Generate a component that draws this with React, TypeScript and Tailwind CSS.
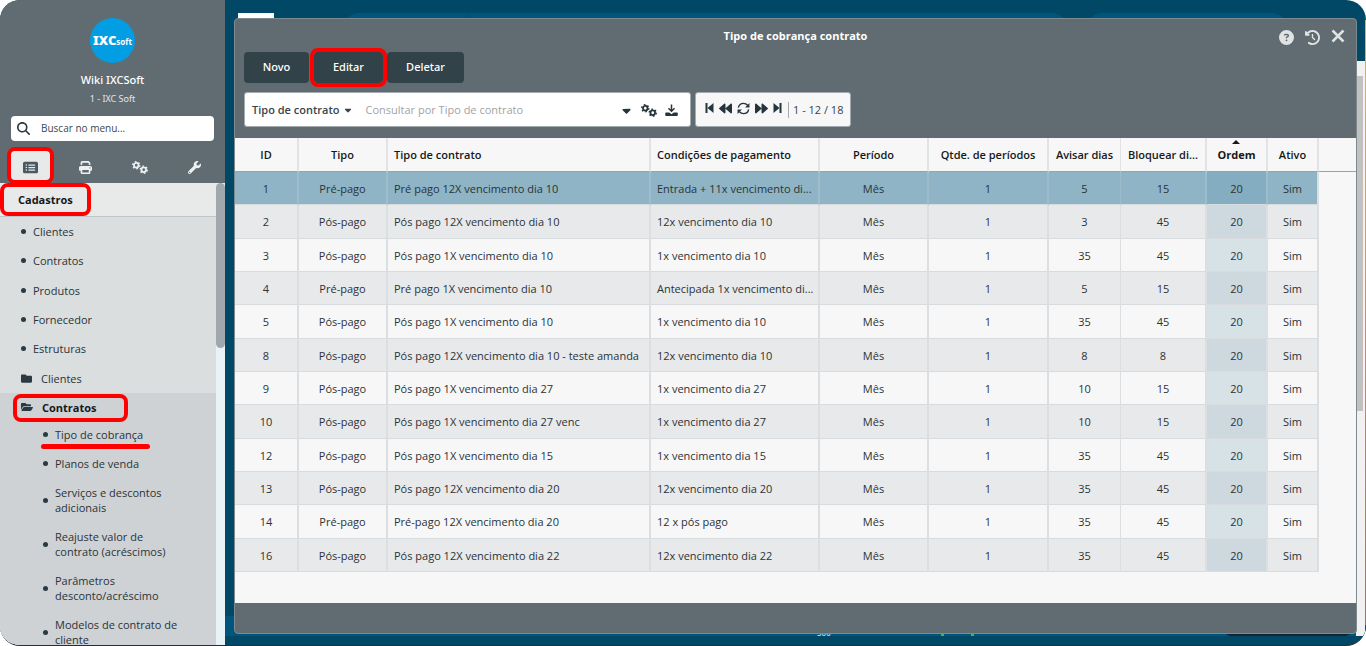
import type { ReactNode } from "react";
import { FaBackward, FaFolder, FaFolderOpen, FaForward, FaWrench } from "react-icons/fa";
import {
  FaCaretDown,
  FaCircleQuestion,
  FaClockRotateLeft,
  FaMagnifyingGlass,
  FaPrint,
  FaRectangleList,
} from "react-icons/fa6";

const shortcuts = ["Clientes", "Contratos", "Produtos", "Fornecedor", "Estruturas"];

const contratosLinks = [
  "Tipo de cobrança",
  "Planos de venda",
  "Serviços e descontos adicionais",
  "Reajuste valor de contrato (acréscimos)",
  "Parâmetros desconto/acréscimo",
  "Modelos de contrato de cliente",
];

const columns = [
  { name: "ID", width: "w-[64px]" },
  { name: "Tipo", width: "w-[89px]" },
  { name: "Tipo de contrato", width: "w-[263px]", left: true },
  { name: "Condições de pagamento", width: "w-[169px]", left: true },
  { name: "Período", width: "w-[109px]" },
  { name: "Qtde. de períodos", width: "w-[120px]" },
  { name: "Avisar dias", width: "w-[72px]", thin: true },
  { name: "Bloquear di...", width: "w-[86px]" },
  { name: "Ordem", width: "w-[61px]", sorted: true },
  { name: "Ativo", width: "w-[51px]" },
];

const rows = [
  ["1", "Pré-pago", "Pré pago 12X vencimento dia 10", "Entrada + 11x vencimento di...", "Mês", "1", "5", "15", "20", "Sim"],
  ["2", "Pós-pago", "Pós pago 12X vencimento dia 10", "12x vencimento dia 10", "Mês", "1", "3", "45", "20", "Sim"],
  ["3", "Pós-pago", "Pós pago 1X vencimento dia 10", "1x vencimento dia 10", "Mês", "1", "35", "45", "20", "Sim"],
  ["4", "Pré-pago", "Pré pago 1X vencimento dia 10", "Antecipada 1x vencimento di...", "Mês", "1", "5", "15", "20", "Sim"],
  ["5", "Pós-pago", "Pós pago 1X vencimento dia 10", "1x vencimento dia 10", "Mês", "1", "35", "45", "20", "Sim"],
  ["8", "Pós-pago", "Pós pago 12X vencimento dia 10 - teste amanda", "12x vencimento dia 10", "Mês", "1", "8", "8", "20", "Sim"],
  ["9", "Pós-pago", "Pós pago 1X vencimento dia 27", "1x vencimento dia 27", "Mês", "1", "10", "15", "20", "Sim"],
  ["10", "Pós-pago", "Pós pago 1X vencimento dia 27 venc", "1x vencimento dia 27", "Mês", "1", "10", "15", "20", "Sim"],
  ["12", "Pós-pago", "Pós pago 1X vencimento dia 15", "1x vencimento dia 15", "Mês", "1", "35", "45", "20", "Sim"],
  ["13", "Pós-pago", "Pós pago 12X vencimento dia 20", "12x vencimento dia 20", "Mês", "1", "35", "45", "20", "Sim"],
  ["14", "Pré-pago", "Pré-pago 12X vencimento dia 20", "12 x pós pago", "Mês", "1", "35", "45", "20", "Sim"],
  ["16", "Pós-pago", "Pós pago 12X vencimento dia 22", "12x vencimento dia 22", "Mês", "1", "35", "45", "20", "Sim"],
];

function Mark({ className }: { className: string }) {
  return (
    <span
      aria-hidden="true"
      className={`pointer-events-none absolute z-10 rounded-lg border-4 border-[#ff0000] ${className}`}
    />
  );
}

function Gears({ className }: { className?: string }) {
  return (
    <svg viewBox="0 0 32 26" className={className} fill="none" stroke="currentColor" aria-hidden="true">
      <circle cx="8.5" cy="8.5" r="4.6" strokeWidth="3.6" />
      <circle cx="8.5" cy="8.5" r="7.2" strokeWidth="2.6" strokeDasharray="3.4 4.14" />
      <circle cx="23.5" cy="17.5" r="4.6" strokeWidth="3.6" />
      <circle cx="23.5" cy="17.5" r="7.2" strokeWidth="2.6" strokeDasharray="3.4 4.14" />
    </svg>
  );
}

function DownloadIcon() {
  return (
    <svg viewBox="0 0 26 26" className="size-[13px]" fill="currentColor" aria-hidden="true">
      <path d="M11.5 1h3v10l3.6-3.6 2 2L13 16.5 5.9 9.4l2-2 3.6 3.6z" />
      <path d="M2 17h6.5l4.5 3.5 4.5-3.5H24a1.5 1.5 0 0 1 1.5 1.5v4A1.5 1.5 0 0 1 24 24H2a1.5 1.5 0 0 1-1.5-1.5v-4A1.5 1.5 0 0 1 2 17z" />
    </svg>
  );
}

function RefreshIcon() {
  return (
    <svg viewBox="0 0 24 24" className="size-[13px]" aria-hidden="true">
      <path
        d="M2.5 10.5C3.5 5.5 7.5 2.5 12 2.5c3 0 5.5 1.2 7.5 3.5M21.5 13.5c-1 5-5 8-9.500 8-3 0-5.500-1.200-7.500-3.500"
        fill="none"
        stroke="currentColor"
        strokeWidth="2.6"
      />
      <path d="M23 2v8h-8zM1 22v-8h8z" fill="currentColor" />
    </svg>
  );
}

function StepIcon({ flip }: { flip?: boolean }) {
  return (
    <svg viewBox="0 0 9 12" className={`h-3 w-[9px] ${flip ? "-scale-x-100" : ""}`} fill="currentColor" aria-hidden="true">
      <path d="M0.5 1h2v10h-2z" />
      <path d="M8.5 1v10l-6-5z" />
    </svg>
  );
}

function SidebarTab({ label, active, children }: { label: string; active?: boolean; children: ReactNode }) {
  return (
    <button
      aria-label={label}
      className={`relative flex h-8 w-[39px] items-center justify-center ${
        active ? "bg-[#e8eae9] text-[#4b5a62]" : "text-[#eef1f2]"
      }`}
    >
      {children}
      {active && <Mark className="-inset-x-1 -top-1 -bottom-px" />}
    </button>
  );
}

function Bullet() {
  return <span className="size-[5px] shrink-0 rounded-full bg-[#2b3a42]" />;
}

function Sidebar() {
  return (
    <aside className="flex w-[225px] shrink-0 flex-col bg-[#606c71]">
      <div className="flex flex-col items-center pt-[18px] font-['Noto_Sans',sans-serif]">
        <div className="flex size-[45px] items-baseline justify-center rounded-full bg-[#029de2] pt-3 leading-5 text-white">
          <b className="text-[13px] leading-5 font-black">IXC</b>
          <b className="text-[8px] leading-5">soft</b>
        </div>
        <p className="mt-2 text-[11px] leading-[18px] font-medium text-white">Wiki IXCSoft</p>
        <p className="mt-1 text-[9px] leading-3 text-[#e3e6e7]">1 - IXC Soft</p>
      </div>
      <label className="mx-[11px] mt-[11px] flex h-[25px] items-center gap-[11px] rounded bg-white pl-[6px]">
        <FaMagnifyingGlass className="size-[13px] text-[#2b3a42]" />
        <input
          aria-label="Buscar no menu"
          placeholder="Buscar no menu..."
          className="min-w-0 flex-1 text-[10px] outline-none placeholder:text-[#3b474d]"
        />
      </label>
      <nav className="mt-[10px] flex justify-between pr-[11px] pl-[11px]">
        <SidebarTab label="Menu" active>
          <FaRectangleList className="size-[15px]" />
        </SidebarTab>
        <SidebarTab label="Imprimir">
          <FaPrint className="size-[13px]" />
        </SidebarTab>
        <SidebarTab label="Configurações">
          <Gears className="h-[13px] w-4" />
        </SidebarTab>
        <SidebarTab label="Ferramentas">
          <FaWrench className="size-[13px]" />
        </SidebarTab>
      </nav>

      <div className="flex min-h-0 flex-1 overflow-hidden bg-[#e9f2f6] text-[11px] leading-[15px] text-[#2b3337]">
        <div className="min-w-0 flex-1 bg-[#dadede]">
          <h2 className="relative flex h-[34px] items-center border-b border-[#bfc5c8] bg-[#e8eae9] pl-[18px] font-bold text-[#15191b]">
            Cadastros
            <Mark className="inset-y-0 left-0 w-[91px]" />
          </h2>
          <ul className="flex h-[176px] flex-col">
            {shortcuts.map((item) => (
              <li key={item} className="flex-1">
                <a href="#" className="flex h-full items-center gap-[7px] pl-[21px]">
                  <Bullet />
                  {item}
                </a>
              </li>
            ))}
            <li className="flex-1">
              <a href="#" className="flex h-full items-center gap-[9px] pl-[21px]">
                <FaFolder className="size-[11px] text-[#2b3a42]" />
                Clientes
              </a>
            </li>
          </ul>
          <div className="bg-[#ced2d5]">
            <button className="relative flex h-[27px] w-full items-center gap-[9px] pt-px pl-[21px] font-bold text-[#15191b]">
              <FaFolderOpen className="size-3 text-[#2b3a42]" />
              Contratos
              <Mark className="top-px left-[13px] h-7 w-[115px]" />
            </button>
            <ul>
              {contratosLinks.map((item, i) => (
                <li key={item} className="relative">
                  <a href="#" className="flex min-h-[29px] items-center gap-[7px] py-[7px] pr-9 pl-[43px]">
                    <Bullet />
                    {item}
                  </a>
                  {i === 0 && (
                    <span className="absolute top-6 left-[41px] h-[5px] w-[109px] rounded-full bg-[#ff0000]" />
                  )}
                </li>
              ))}
            </ul>
          </div>
        </div>
        <div className="w-[9px]">
          <div className="h-[165px] rounded-full bg-[#a0a8ae]" />
        </div>
      </div>
    </aside>
  );
}

/* Dashboard that stays visible around the open window */
function Backdrop() {
  return (
    <div className="absolute inset-0 flex flex-col justify-between pt-[13px] pb-[9px]" aria-hidden="true">
      <div className="flex h-8">
        <div className="ml-[13px] w-9 bg-white" />
        <div className="ml-[69px] w-[725px] rounded-t-2xl bg-[#00557c] pl-[124px]">
          <div className="h-full w-px bg-[#004e72]" />
        </div>
        <div className="ml-[18px] w-[202px] rounded-t-2xl bg-[#00557c]" />
      </div>
      <div className="flex h-5 items-end bg-[#00557c] pr-[15px] pl-[592px] text-[8px] leading-[6px] font-semibold text-[#c6d9e3]">
        <span>500</span>
        <span className="ml-[110px] h-2 w-[3px] bg-[#4caf50]" />
        <span className="ml-[27px] h-2 w-[3px] bg-[#4caf50]" />
        <span className="ml-auto h-4 w-[126px] rounded-b-md bg-[#0f2632]" />
      </div>
      <div className="absolute top-[61px] right-px bottom-[9px] flex w-[9px] flex-col bg-[#f1f1f1]">
        <div className="mt-[15px] h-[335px] w-[7px] bg-[#c1c1c1]" />
      </div>
      <div className="absolute top-5 right-0 bottom-5 w-px bg-gradient-to-b from-[#f0b429] via-[#e8844a] to-[#a86a78]" />
    </div>
  );
}

function Toolbar() {
  const button = "h-[31px] rounded bg-[#324249] font-['Noto_Sans',sans-serif] text-[11px] font-medium text-white";

  return (
    <div className="px-[9px] pb-[11px] text-[11px]">
      <div className="flex gap-[5px]">
        <button className={`${button} w-[65px]`}>Novo</button>
        <button className={`${button} relative w-[69px]`}>
          Editar
          <Mark className="-inset-1" />
        </button>
        <button className={`${button} -ml-px w-[77px]`}>Deletar</button>
      </div>
      <div className="mt-[9px] flex gap-1">
        <div className="flex h-[35px] w-[447px] items-center rounded-[3px] border border-[#a3abaf] bg-white pt-px text-[#26343b]">
          <button className="flex items-center gap-1 pl-[7px] font-semibold text-[#3a4347]">
            Tipo de contrato
            <FaCaretDown className="size-[10px]" />
          </button>
          <input
            aria-label="Consultar"
            placeholder="Consultar por Tipo de contrato"
            className="ml-3 min-w-0 flex-1 outline-none placeholder:text-[#a3a3a3]"
          />
          <div className="flex items-center gap-2 pr-3">
            <button aria-label="Opções de busca">
              <FaCaretDown className="size-[13px]" />
            </button>
            <button aria-label="Configurar grade">
              <Gears className="h-[13px] w-4" />
            </button>
            <button aria-label="Exportar">
              <DownloadIcon />
            </button>
          </div>
        </div>
        <div className="flex h-[35px] w-[156px] items-center rounded-[3px] border border-[#a3abaf] bg-[#f7f7f7] pt-px pl-[9px] text-[#26343b]">
          <div className="flex items-center gap-[5px] pr-[6px] pb-1">
            <button aria-label="Primeira página">
              <StepIcon />
            </button>
            <button aria-label="Página anterior">
              <FaBackward className="size-[13px]" />
            </button>
            <button aria-label="Atualizar">
              <RefreshIcon />
            </button>
            <button aria-label="Próxima página">
              <FaForward className="size-[13px]" />
            </button>
            <button aria-label="Última página">
              <StepIcon flip />
            </button>
          </div>
          <span className="border-l border-[#a3abaf] pl-1 text-[#3a4347]">1 - 12 / 18</span>
        </div>
      </div>
    </div>
  );
}

function ContractTable() {
  return (
    <table className="w-full table-fixed border-separate border-spacing-0 text-[11px] leading-[15px] text-[#2b3337]">
      <thead>
        <tr className="h-[34px]">
          {columns.map((col) => (
            <th
              key={col.name}
              className={`relative border-b border-b-[#98a1a6] border-r-[#e2e3e4] whitespace-nowrap text-[#15191b] ${col.width} ${
                col.left ? "px-[6px] text-left" : "text-center"
              } ${col.thin ? "border-r" : "border-r-2"} ${col.sorted ? "font-bold" : "font-semibold"}`}
            >
              {col.sorted && (
                <svg viewBox="0 0 8 4" className="absolute top-[2px] left-[25px] h-1 w-2" fill="currentColor">
                  <path d="M4 0l4 4H0z" />
                </svg>
              )}
              {col.name}
            </th>
          ))}
          <th aria-label="Ações" className="border-b border-[#98a1a6]" />
        </tr>
      </thead>
      <tbody>
        {rows.map((row, r) => {
          const selected = r === 0;
          const striped = r % 2 === 1;
          return (
            <tr key={row[0]} className={r % 3 === 1 ? "h-[34px]" : "h-[33px]"}>
              {row.map((value, c) => {
                const col = columns[c];
                let bg = striped ? "bg-[#e8e9eb]" : "bg-[#f7f7f7]";
                if (col.sorted) bg = striped ? "bg-[#cdd8df]" : "bg-[#d7e2e6]";
                if (selected) bg = col.sorted ? "bg-[#84adc1]" : "bg-[#8eb4c5]";
                return (
                  <td
                    key={col.name}
                    className={`border-b border-b-[#d9dcde] whitespace-nowrap ${bg} ${
                      selected && c < 9 ? "border-r-[#9dbdca]" : "border-r-[#dcdfe1]"
                    } ${col.left ? "px-[6px] text-left" : "text-center"} ${col.thin ? "border-r" : "border-r-2"}`}
                  >
                    {value}
                  </td>
                );
              })}
              <td />
            </tr>
          );
        })}
      </tbody>
    </table>
  );
}

function ContractWindow() {
  return (
    <section className="relative flex flex-1 flex-col overflow-hidden rounded border border-[#7d8b90] bg-[#606c71]">
      <header className="relative flex h-[33px] items-center justify-center pt-[2px]">
        <h1 className="text-[11px] font-bold text-white">Tipo de cobrança contrato</h1>
        <div className="absolute top-[10px] right-[11px] flex items-center gap-[11px] text-[#dfe3e4]">
          <button aria-label="Ajuda">
            <FaCircleQuestion className="size-[15px]" />
          </button>
          <button aria-label="Histórico">
            <FaClockRotateLeft className="size-[15px]" />
          </button>
          <button aria-label="Fechar" className="pb-[2px]">
            <svg viewBox="0 0 14 14" className="size-[14px]" fill="none" stroke="currentColor" strokeWidth="2.5">
              <path d="M1.5 1.5l11 11m0-11l-11 11" />
            </svg>
          </button>
        </div>
      </header>
      <Toolbar />
      <div className="min-h-0 flex-1 overflow-hidden bg-[#f7f7f7]">
        <ContractTable />
      </div>
      <footer className="h-[30px]" />
    </section>
  );
}

export default function App() {
  return (
    <div className="bg-white font-['Open_Sans',sans-serif]">
      <div className="flex h-screen overflow-hidden rounded-[20px] border-b border-[#2a2d33] bg-[#004866]">
        <Sidebar />
        <main className="relative flex min-w-0 flex-1 flex-col px-[9px] pt-[18px] pb-[11px]">
          <Backdrop />
          <ContractWindow />
        </main>
      </div>
    </div>
  );
}
